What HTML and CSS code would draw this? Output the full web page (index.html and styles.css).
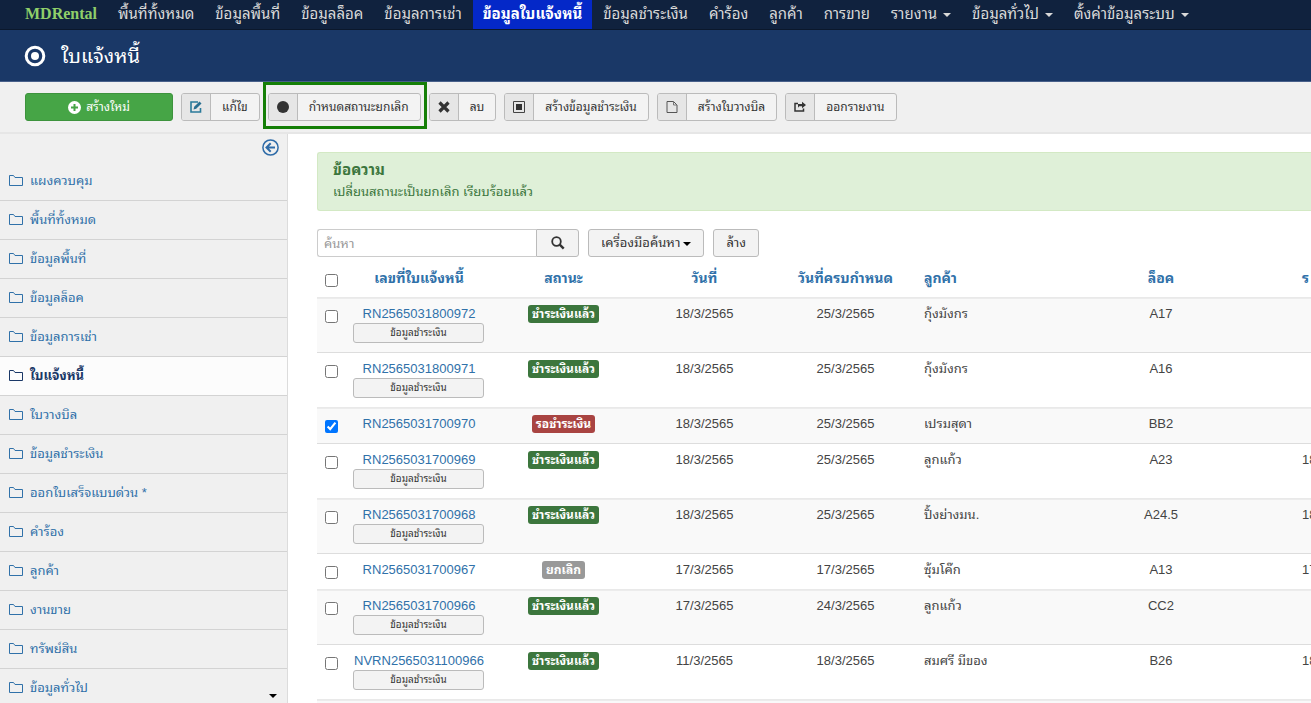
FILE: index.html
```
<!DOCTYPE html>
<html lang="th">
<head>
<meta charset="utf-8">
<title>ใบแจ้งหนี้ - MDRental</title>
<link rel="stylesheet" href="styles.css">
</head>
<body>
<svg class="sprite" aria-hidden="true">
  <symbol id="folder" viewBox="0 0 14 12"><path d="M.5 10.500V.5h4L6 2.500h7.500v8z" fill="none" stroke="currentColor" stroke-width="1"/></symbol>
</svg>
<nav class="topnav">
  <a class="brand" href="#">MDRental</a>
  <a href="#">พื้นที่ทั้งหมด</a>
  <a href="#">ข้อมูลพื้นที่</a>
  <a href="#">ข้อมูลล็อค</a>
  <a href="#">ข้อมูลการเช่า</a>
  <a class="current" href="#">ข้อมูลใบแจ้งหนี้</a>
  <a href="#">ข้อมูลชำระเงิน</a>
  <a href="#">คำร้อง</a>
  <a href="#">ลูกค้า</a>
  <a href="#">การขาย</a>
  <a href="#">รายงาน<span class="caret"></span></a>
  <a href="#">ข้อมูลทั่วไป<span class="caret"></span></a>
  <a href="#">ตั้งค่าข้อมูลระบบ<span class="caret"></span></a>
</nav>
<header class="titlebar">
  <svg width="22" height="22" viewBox="0 0 22 22" aria-hidden="true"><circle cx="11" cy="11" r="8.800" fill="none" stroke="#fff" stroke-width="3"/><circle cx="11" cy="11" r="4" fill="#fff"/></svg>
  <h1>ใบแจ้งหนี้</h1>
</header>
<div class="toolbar">
  <button class="tool new"><svg width="13" height="13" viewBox="0 0 13 13" aria-hidden="true"><circle cx="6.500" cy="6.500" r="6.500" fill="#fff"/><path d="M6.500 3v7M3 6.500h7" stroke="#46a546" stroke-width="2"/></svg>สร้างใหม่</button>
  <button class="tool"><span class="ico"><svg width="12" height="12" viewBox="0 0 12 12" aria-hidden="true"><path d="M8 1H1v10h9.500V7" fill="none" stroke="#2a7a9a" stroke-width="1.600"/><path d="M3.500 8.500l.7-2.700L9.500.5l2 2-5.300 5.300z" fill="#2a6f91"/></svg></span><span class="txt">แก้ไข</span></button>
  <span class="marked"><button class="tool"><span class="ico"><svg width="12" height="12" viewBox="0 0 12 12" aria-hidden="true"><circle cx="6" cy="6" r="6" fill="#333"/></svg></span><span class="txt">กำหนดสถานะยกเลิก</span></button></span>
  <button class="tool"><span class="ico"><svg width="12" height="12" viewBox="0 0 12 12" aria-hidden="true"><path d="M1.500 1.500l9 9M10.500 1.500l-9 9" stroke="#333" stroke-width="3.200"/></svg></span><span class="txt">ลบ</span></button>
  <button class="tool"><span class="ico"><svg width="12" height="12" viewBox="0 0 12 12" aria-hidden="true"><path d="M.5.5h11v11H.5z" fill="none" stroke="#444"/><path d="M3 3h6v6H3z" fill="#333"/></svg></span><span class="txt">สร้างข้อมูลชำระเงิน</span></button>
  <button class="tool"><span class="ico"><svg width="12" height="12" viewBox="0 0 12 12" aria-hidden="true"><path d="M1 .5h6.500L11 4v7.500H1z" fill="none" stroke="#555"/><path d="M7.500.5V4H11" fill="none" stroke="#777"/></svg></span><span class="txt">สร้างใบวางบิล</span></button>
  <button class="tool"><span class="ico"><svg width="12" height="12" viewBox="0 0 12 12" aria-hidden="true"><path d="M4 2.500H1v7.500h8.500V7.500" fill="none" stroke="#333" stroke-width="1.500"/><path d="M8 .8L12 4 8 7.200V5.200H5.200L4 6.800V3h4z" fill="#333"/></svg></span><span class="txt">ออกรายงาน</span></button>
</div>
<div class="layout">
  <aside class="sidebar">
    <button class="collapse" aria-label="ซ่อนเมนู"><svg width="17" height="17" viewBox="0 0 17 17" aria-hidden="true"><circle cx="8.500" cy="8.500" r="7.600" fill="none" stroke="#2f6ca8" stroke-width="1.500"/><path d="M13 8.500H4.500M8.700 4.300L4.500 8.500l4.200 4.200" fill="none" stroke="#2f6ca8" stroke-width="2"/></svg></button>
    <ul>
      <li><a href="#"><svg><use href="#folder"/></svg>แผงควบคุม</a></li>
      <li><a href="#"><svg><use href="#folder"/></svg>พื้นที่ทั้งหมด</a></li>
      <li><a href="#"><svg><use href="#folder"/></svg>ข้อมูลพื้นที่</a></li>
      <li><a href="#"><svg><use href="#folder"/></svg>ข้อมูลล็อค</a></li>
      <li><a href="#"><svg><use href="#folder"/></svg>ข้อมูลการเช่า</a></li>
      <li class="active"><a href="#"><svg><use href="#folder"/></svg>ใบแจ้งหนี้</a></li>
      <li><a href="#"><svg><use href="#folder"/></svg>ใบวางบิล</a></li>
      <li><a href="#"><svg><use href="#folder"/></svg>ข้อมูลชำระเงิน</a></li>
      <li><a href="#"><svg><use href="#folder"/></svg>ออกใบเสร็จแบบด่วน *</a></li>
      <li><a href="#"><svg><use href="#folder"/></svg>คำร้อง</a></li>
      <li><a href="#"><svg><use href="#folder"/></svg>ลูกค้า</a></li>
      <li><a href="#"><svg><use href="#folder"/></svg>งานขาย</a></li>
      <li><a href="#"><svg><use href="#folder"/></svg>ทรัพย์สิน</a></li>
      <li><a href="#"><svg><use href="#folder"/></svg>ข้อมูลทั่วไป</a><span class="caret more"></span></li>
    </ul>
  </aside>
  <main>
    <div class="alert"><h4>ข้อความ</h4><p>เปลี่ยนสถานะเป็นยกเลิก เรียบร้อยแล้ว</p></div>
    <form class="filters">
      <div class="search">
        <input type="text" placeholder="ค้นหา" aria-label="ค้นหา">
        <button type="button" class="btn" aria-label="ค้นหา"><svg width="14" height="14" viewBox="0 0 14 14" aria-hidden="true"><circle cx="5.500" cy="5.500" r="4.300" fill="none" stroke="#333" stroke-width="1.800"/><path d="M8.700 8.700l4 4" stroke="#333" stroke-width="2.400"/></svg></button>
      </div>
      <button type="button" class="btn">เครื่องมือค้นหา<span class="caret"></span></button>
      <button type="button" class="btn">ล้าง</button>
    </form>
    <table>
      <colgroup><col class="c-check"><col class="c-no"><col class="c-mid"><col class="c-mid"><col class="c-mid"><col><col class="c-lock"><col class="c-last"></colgroup>
      <thead><tr><th><input type="checkbox" aria-label="เลือกทั้งหมด"></th><th><a href="#">เลขที่ใบแจ้งหนี้</a></th><th><a href="#">สถานะ</a></th><th><a href="#">วันที่</a></th><th><a href="#">วันที่ครบกำหนด</a></th><th class="left"><a href="#">ลูกค้า</a></th><th><a href="#">ล็อค</a></th><th class="cut"><a href="#">ร</a></th></tr></thead>
      <tbody>
        <tr><td><input type="checkbox" aria-label="RN2565031800972"></td><td><a href="#">RN2565031800972</a><button class="pay">ข้อมูลชำระเงิน</button></td><td><span class="label paid">ชำระเงินแล้ว</span></td><td>18/3/2565</td><td>25/3/2565</td><td class="left">กุ้งมังกร</td><td>A17</td><td></td></tr>
        <tr><td><input type="checkbox" aria-label="RN2565031800971"></td><td><a href="#">RN2565031800971</a><button class="pay">ข้อมูลชำระเงิน</button></td><td><span class="label paid">ชำระเงินแล้ว</span></td><td>18/3/2565</td><td>25/3/2565</td><td class="left">กุ้งมังกร</td><td>A16</td><td></td></tr>
        <tr><td><input type="checkbox" checked aria-label="RN2565031700970"></td><td><a href="#">RN2565031700970</a></td><td><span class="label wait">รอชำระเงิน</span></td><td>18/3/2565</td><td>25/3/2565</td><td class="left">เปรมสุดา</td><td>BB2</td><td></td></tr>
        <tr><td><input type="checkbox" aria-label="RN2565031700969"></td><td><a href="#">RN2565031700969</a><button class="pay">ข้อมูลชำระเงิน</button></td><td><span class="label paid">ชำระเงินแล้ว</span></td><td>18/3/2565</td><td>25/3/2565</td><td class="left">ลูกแก้ว</td><td>A23</td><td class="cut">18</td></tr>
        <tr><td><input type="checkbox" aria-label="RN2565031700968"></td><td><a href="#">RN2565031700968</a><button class="pay">ข้อมูลชำระเงิน</button></td><td><span class="label paid">ชำระเงินแล้ว</span></td><td>18/3/2565</td><td>25/3/2565</td><td class="left">ปิ้งย่างมน.</td><td>A24.5</td><td class="cut">18</td></tr>
        <tr><td><input type="checkbox" aria-label="RN2565031700967"></td><td><a href="#">RN2565031700967</a></td><td><span class="label cancel">ยกเลิก</span></td><td>17/3/2565</td><td>17/3/2565</td><td class="left">ซุ้มโค๊ก</td><td>A13</td><td class="cut">17</td></tr>
        <tr><td><input type="checkbox" aria-label="RN2565031700966"></td><td><a href="#">RN2565031700966</a><button class="pay">ข้อมูลชำระเงิน</button></td><td><span class="label paid">ชำระเงินแล้ว</span></td><td>17/3/2565</td><td>24/3/2565</td><td class="left">ลูกแก้ว</td><td>CC2</td><td></td></tr>
        <tr><td><input type="checkbox" aria-label="NVRN2565031100966"></td><td><a href="#">NVRN2565031100966</a><button class="pay">ข้อมูลชำระเงิน</button></td><td><span class="label paid">ชำระเงินแล้ว</span></td><td>11/3/2565</td><td>18/3/2565</td><td class="left">สมศรี มีของ</td><td>B26</td><td class="cut">18</td></tr>
      </tbody>
      <tfoot><tr><td colspan="8"></td></tr></tfoot>
    </table>
  </main>
</div>
</body>
</html>
```
FILE: styles.css
```
* { box-sizing: border-box; }
html { height: 100%; }
body { margin: 0; height: 100%; display: flex; flex-direction: column; overflow: hidden; background: #fff; color: #444; font: 13px/18px "Liberation Sans", "Noto Sans Thai Looped", Loma, Waree, "Noto Sans Thai", sans-serif; }
a { color: #3071a9; text-decoration: none; }
button, input { font: inherit; }
h1, h4, p, ul { margin: 0; padding: 0; }
.sprite { display: none; }
.caret { display: inline-block; border: 4px solid transparent; border-top-color: currentColor; border-bottom: 0; vertical-align: middle; margin-left: 6px; }

.topnav { flex: none; display: flex; gap: 1px; height: 30px; padding-left: 15px; background: #10223e; border-bottom: 1px solid #0b182c; }
.topnav a { padding: 0 10px; font-size: 15px; line-height: 28px; color: #d9d9d9; white-space: nowrap; }
.topnav .brand { font-family: "Liberation Serif", serif; font-weight: bold; font-size: 16px; color: #8fcf6a; }
.topnav .current { background: #0428c8; color: #fff; font-weight: bold; }

.titlebar { flex: none; display: flex; align-items: center; gap: 15px; height: 52px; padding: 0 24px; background: #1a3867; border-bottom: 1px solid #48608a; color: #fff; }
.titlebar h1 { font-size: 20px; line-height: 32px; font-weight: normal; }

.toolbar { flex: none; display: flex; align-items: center; gap: 8px; height: 52px; padding: 0 25px; background: #f0f0f0; border-bottom: 2px solid #e6e6e6; }
.tool { display: flex; height: 28px; padding: 0; border: 1px solid #bbb; border-radius: 3px; background: #f3f3f3; color: #333; font-size: 12px; line-height: 26px; white-space: nowrap; overflow: hidden; }
.tool .ico { display: flex; align-items: center; justify-content: center; width: 29px; background: #e6e6e6; border-right: 1px solid #bbb; }
.tool .txt { padding: 0 11px; }
.new { width: 148px; align-items: center; justify-content: center; gap: 5px; background: #46a546; border-color: #3d933d; color: #fff; }
.marked { position: relative; }
.marked::after { content: ""; position: absolute; inset: -11px -6px -8px -5px; border: 3px solid #157f07; pointer-events: none; }

.layout { flex: 1; min-height: 0; display: flex; overflow: hidden; }
.sidebar { flex: none; width: 288px; background: #f0f0f0; border-right: 1px solid #dcdcdc; }
.collapse { display: block; margin: 5px 8px 6px auto; padding: 0; border: 0; background: none; width: 17px; height: 17px; }
.sidebar ul { list-style: none; }
.sidebar li { position: relative; height: 39px; border-bottom: 1px solid #d3d3d3; }
.sidebar a { display: flex; align-items: center; gap: 7px; height: 38px; padding-left: 9px; }
.sidebar svg { width: 14px; height: 12px; }
.sidebar .collapse svg { display: block; width: 17px; height: 17px; }
.sidebar .active { background: #fcfcfc; }
.sidebar .active a { color: #1a3867; font-weight: bold; }
.more { position: absolute; right: 10px; top: 25px; color: #000; }

main { flex: 1; min-width: 0; padding: 18px 0 0 29px; }
.alert { height: 59px; padding: 7px 15px; background: #dff0d8; border: 1px solid #d3e9c4; border-right: 0; border-radius: 3px 0 0 3px; color: #3c763d; }
.alert h4 { font-size: 15px; line-height: 20px; }
.alert p { line-height: 24px; }
.filters { display: flex; gap: 9px; margin-top: 18px; }
.search { display: flex; width: 262px; }
.search input { flex: 1; min-width: 0; height: 28px; padding: 0 6px; border: 1px solid #ccc; border-right: 0; border-radius: 3px 0 0 3px; }
.search input::placeholder { color: #999; }
.btn { height: 28px; padding: 0 12px; border: 1px solid #bbb; border-radius: 3px; background: #f3f3f3; color: #333; line-height: 24px; white-space: nowrap; }
.search .btn { display: flex; align-items: center; justify-content: center; width: 43px; border-radius: 0 3px 3px 0; }
.btn .caret { color: #000; margin-left: 3px; }

table { width: 100%; margin-top: 5px; table-layout: fixed; border-collapse: collapse; }
.c-check { width: 28px; }
.c-no { width: 148px; }
.c-mid { width: 141px; }
.c-lock { width: 140px; }
.c-last { width: 80px; }
th, td { padding: 7px 8px 0; vertical-align: top; text-align: center; white-space: nowrap; }
th { height: 35px; font-size: 14px; }
td { height: 36px; border-top: 1px solid #ddd; }
tbody tr:nth-child(odd) td, tfoot td { border-top-color: #e9e9e9; background: #f9f9f9; box-shadow: inset 0 1px #ececec; }
th:first-child, td:first-child { padding: 12px 0 0; }
input[type="checkbox"] { display: block; width: 13px; height: 13px; margin: 0 auto; }
.left { text-align: left; }
.cut { overflow: hidden; padding: 7px 0 0 71px; text-align: left; text-overflow: clip; }
.pay { display: block; width: 131px; height: 20px; margin: 0 0 9px; padding: 0; border: 1px solid #bbb; border-radius: 3px; background: #f3f3f3; color: #333; font-size: 10px; line-height: 16px; }
.label { display: inline-block; padding: 0 4px; border-radius: 3px; color: #fff; font-size: 12px; font-weight: bold; line-height: 18px; }
.paid { background: #3c763d; }
.wait { background: #a94442; }
.cancel { background: #999; }
```
